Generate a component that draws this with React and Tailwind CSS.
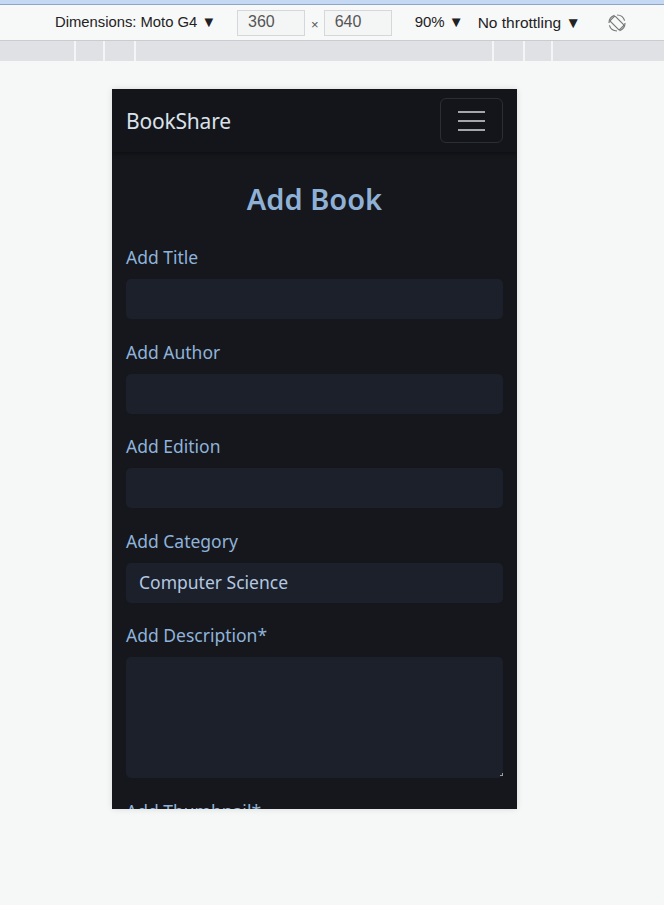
import React from "react";

function Field({ label, value, tall }) {
  return (
    <div className="flex flex-col">
      <label className="text-[17.5px] leading-[26px] text-[#8fb3da] mb-[9px]">{label}</label>
      {tall ? (
        <div className="relative h-[121px] rounded-[5px] bg-[#1b202b]">
          <div className="absolute right-0 bottom-[2px] w-[3px] h-[3px] border-r border-b border-[#9aa0a8]" />
        </div>
      ) : (
        <div className="h-[40px] rounded-[5px] bg-[#1b202b] flex items-center px-[13px] text-[17.5px] text-[#b4c8e0]">
          {value}
        </div>
      )}
    </div>
  );
}

export default function App() {
  return (
    <div className="w-[664px] h-[905px] bg-[#f6f7f7] overflow-hidden" style={{ fontFamily: '"Noto Sans", "Open Sans", sans-serif' }}>
      <div className="h-[4px] bg-[#c6d9f4]" />
      <div className="h-[1px] bg-[#8fa6c6]" />
      <div className="h-[35px] bg-[#f7f8f8] flex items-center text-[#222]" style={{ fontFamily: '"Liberation Sans", Arial, sans-serif' }}>
        <span className="ml-[55px] text-[14.8px]">Dimensions: Moto G4 ▼</span>
        <div className="ml-[21px] w-[68px] h-[26px] border border-[#d5d7da] bg-[#f4f5f5] text-[16px] text-[#555] pl-[10px] leading-[22px]">360</div>
        <span className="ml-[6px] mr-[5px] text-[13px] text-[#555] mt-[4px]">×</span>
        <div className="w-[68px] h-[26px] border border-[#d5d7da] bg-[#f4f5f5] text-[16px] text-[#555] pl-[10px] leading-[22px]">640</div>
        <span className="ml-[23px] text-[15px]">90% ▼</span>
        <span className="ml-[14px] text-[15.5px]">No throttling ▼</span>
        <svg className="ml-[26px]" width="20" height="20" viewBox="0 0 20 20" fill="none" stroke="#777" strokeWidth="1.2">
          <circle cx="10" cy="10" r="8" strokeDasharray="10 2.5" />
          <rect x="6.5" y="3.5" width="7" height="13" rx="1" transform="rotate(-45 10 10)" fill="#f7f8f8" />
        </svg>
      </div>
      <div className="h-[1px] bg-[#c9ccd1]" />
      <div className="h-[20px] bg-[#dfe1e5] flex">
        <div className="w-[76px] border-r-2 border-[#f4f5f6]" />
        <div className="w-[29px] border-r-2 border-[#f4f5f6]" />
        <div className="w-[31px] border-r-2 border-[#f4f5f6]" />
        <div className="w-[358px] border-r-2 border-[#f4f5f6]" />
        <div className="w-[31px] border-r-2 border-[#f4f5f6]" />
        <div className="w-[28px] border-r-2 border-[#f4f5f6]" />
      </div>
      <div className="pt-[28px] pl-[112px]">
        <div className="w-[405px] h-[720px] bg-[#15171c] overflow-hidden shadow-[0_0_6px_rgba(0,0,0,0.12)]" style={{ fontFamily: '"Noto Sans", "Open Sans", sans-serif' }}>
          <div className="h-[63px] bg-[#13151a] flex items-center justify-between pl-[14px] pr-[14px] shadow-[0_2px_4px_rgba(0,0,0,0.35)] relative">
            <span className="text-[21px] text-[#dbe1ea] tracking-[-0.2px] mt-[3px]">BookShare</span>
            <div className="w-[63px] h-[45px] border border-[#2b2e34] rounded-[6px] flex flex-col items-center justify-center gap-[7px]">
              <div className="w-[27px] h-[2px] bg-[#a3a6ab]" />
              <div className="w-[27px] h-[2px] bg-[#a3a6ab]" />
              <div className="w-[27px] h-[2px] bg-[#a3a6ab]" />
            </div>
          </div>
          <div className="px-[14px]">
            <h1 className="text-center text-[29px] font-semibold text-[#8fb1d6] mt-[27px] leading-[40px]">Add Book</h1>
            <div className="mt-[25px] flex flex-col gap-[19.5px]">
              <Field label="Add Title" />
              <Field label="Add Author" />
              <Field label="Add Edition" />
              <Field label="Add Category" value="Computer Science" />
              <Field label="Add Description*" tall />
              <Field label="Add Thumbnail*" />
            </div>
          </div>
        </div>
      </div>
    </div>
  );
}
